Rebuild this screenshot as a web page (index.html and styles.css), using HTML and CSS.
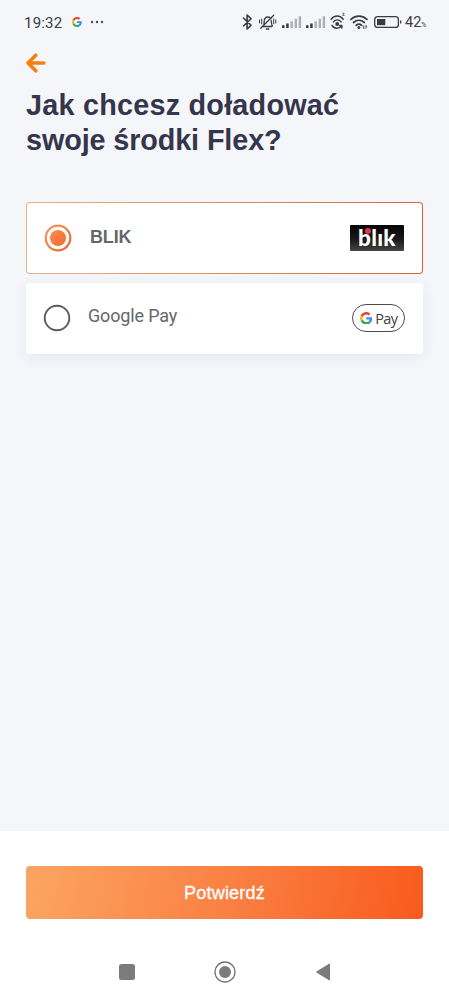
FILE: index.html
```html
<!DOCTYPE html>
<html lang="pl">
<head>
<meta charset="utf-8">
<meta name="viewport" content="width=device-width">
<title>Doładowanie Flex</title>
<link rel="stylesheet" href="styles.css">
</head>
<body>
<svg width="0" height="0" class="defs" aria-hidden="true">
  <defs>
    <symbol id="google-g" viewBox="0 0 48 48">
      <path fill="#EA4335" d="M24 9.500c3.540 0 6.710 1.220 9.210 3.600l6.850-6.850C35.900 2.380 30.470 0 24 0 14.620 0 6.510 5.380 2.560 13.220l7.980 6.190C12.430 13.720 17.740 9.500 24 9.500z"/>
      <path fill="#4285F4" d="M46.980 24.550c0-1.570-.15-3.090-.38-4.550H24v9.020h12.940c-.58 2.960-2.260 5.480-4.780 7.180l7.730 6c4.510-4.180 7.090-10.360 7.090-17.650z"/>
      <path fill="#FBBC05" d="M10.530 28.590c-.48-1.450-.76-2.990-.76-4.590s.27-3.140.76-4.590l-7.980-6.190C.92 16.460 0 20.120 0 24c0 3.880.92 7.540 2.560 10.780l7.970-6.190z"/>
      <path fill="#34A853" d="M24 48c6.480 0 11.930-2.130 15.890-5.810l-7.730-6c-2.150 1.450-4.920 2.300-8.160 2.300-6.260 0-11.570-4.220-13.470-9.910l-7.980 6.190C6.510 42.620 14.620 48 24 48z"/>
    </symbol>
    <linearGradient id="radio-fill" x1="0" y1="0" x2="1" y2="1">
      <stop offset="0" stop-color="#f79a5c"/><stop offset="1" stop-color="#e9622d"/>
    </linearGradient>
    <linearGradient id="dot-fill" x1="0" y1="0" x2="1" y2="1">
      <stop offset="0" stop-color="#fb8d4d"/><stop offset="1" stop-color="#f36a2f"/>
    </linearGradient>
  </defs>
</svg>
<div class="screen">
  <header class="status">
    <span class="time">19:32</span>
    <svg class="status-g" width="10" height="10"><use href="#google-g"/></svg>
    <svg class="more" width="14" height="4" viewBox="0 0 14 4" fill="#444b57"><circle cx="2" cy="2" r="1.200"/><circle cx="7" cy="2" r="1.200"/><circle cx="12" cy="2" r="1.200"/></svg>
    <svg class="icons" width="162" height="22" viewBox="240 11 162 22" fill="none" stroke="#3a3c42" stroke-linecap="round" stroke-linejoin="round">
      <path stroke-width="1.600" d="M243.500 18l7.500 7.300-3.900 3.700V15l3.900 3.700-7.500 7.300"/>
      <g stroke-width="1.300">
        <path d="M262.500 26.500h9.300M263.400 26c.8-1.500.7-2.700.8-5 .2-2.500 1.500-4 3.800-4 1.300 0 2.300.5 3 1.500M271.200 20.500c.1 2.500.2 4 1.200 5.500M266.300 29h2.600M273.700 15.200l-13 13"/>
        <path stroke-width="1" d="M261.700 19v4.800M259.500 20v3M273.700 19v4.800M275.800 20v3"/>
      </g>
      <g stroke="none">
        <g id="signal"><path fill="#3a3c42" d="M282 25.200h2.500v2.900H282zM286.200 23.500h2.500v4.600h-2.500z"/><path fill="#adafb4" d="M290.500 21.200h2.400v6.900h-2.400zM294.600 18.700h2.400v9.400h-2.400zM298.700 16.200h2.400v11.900h-2.400z"/></g>
        <use href="#signal" x="24"/>
      </g>
      <g stroke-width="1.450">
        <path d="M331.100 19.300c3.200-4.400 8.900-4.400 12.100 0M333.300 21.900c2.200-2.700 5.600-2.700 7.800 0M332 25.300c2.100 3.700 7.100 3.900 9.700.4M341.900 28v-2.500h-2.300"/>
        <circle cx="337.200" cy="24" r="1.200" fill="#3a3c42"/>
        <path stroke-width=".7" d="M342.700 13.200h1.500l-1.500 2.300h1.500"/>
      </g>
      <g stroke-width="1.800">
        <path d="M350.900 19.300c4.700-4.300 11.300-4.300 16 0M353.500 22.500c3.200-2.900 7.600-2.900 10.800 0M356.200 25.300c1.500-1.500 3.900-1.500 5.400 0"/>
        <circle cx="358.900" cy="27.500" r=".6" fill="#3a3c42"/>
        <path stroke-width=".9" d="M363.800 25.800v2.500M363 27.600l.8.700M366 28.300v-2.500M366 25.800l.8.700"/>
      </g>
      <rect x="374.700" y="16.700" width="23.700" height="10.700" rx="3" stroke-width="1.300"/>
      <path fill="#3a3c42" stroke="none" d="M377 19h8.300v6.200H377z"/>
      <path stroke-width="1.300" d="M400.700 21v2"/>
    </svg>
    <span class="level">42</span><span class="percent">%</span>
  </header>

  <main class="content">
    <svg class="back" width="20" height="20" viewBox="0 0 20 20" fill="none" stroke="#f4810f" stroke-width="3.500" stroke-linecap="round" stroke-linejoin="round"><path d="M9.800 2.200L2 10l7.800 7.800M2.500 10h15.400"/></svg>
    <h1><span class="line-one">Jak chcesz doładować</span><br><span class="line-two">swoje środki Flex?</span></h1>
    <div class="options">
      <div class="option selected">
        <svg class="radio" width="28" height="28" viewBox="0 0 28 28"><circle cx="14" cy="14" r="12.300" fill="none" stroke="url(#radio-fill)" stroke-width="2.200"/><circle cx="14" cy="14" r="8" fill="url(#dot-fill)"/></svg>
        <span class="label">BLIK</span>
        <span class="blik"><span class="blik-text">blık</span><i class="blik-dot"></i></span>
      </div>
      <div class="option">
        <svg class="radio" width="28" height="28" viewBox="0 0 28 28"><circle cx="14" cy="14" r="12.300" fill="none" stroke="#5b5c60" stroke-width="1.900"/></svg>
        <span class="label">Google Pay</span>
        <span class="gpay"><svg width="12.500" height="12.500"><use href="#google-g"/></svg><span class="pay">Pay</span></span>
      </div>
    </div>
  </main>

  <footer class="footer">
    <button class="confirm">Potwierdź</button>
    <nav class="nav">
      <svg width="16" height="16" viewBox="0 0 16 16"><rect width="16" height="16" rx="2.500" fill="#7b7b7b"/></svg>
      <svg width="22" height="22" viewBox="0 0 22 22"><circle cx="11" cy="11" r="10" fill="none" stroke="#757575" stroke-width="1.300"/><circle cx="11" cy="11" r="6" fill="#7b7b7b"/></svg>
      <svg width="16" height="20" viewBox="0 0 16 20"><path d="M1.500 10L14.500 2v16z" fill="#7b7b7b" stroke="#7b7b7b" stroke-linejoin="round"/></svg>
    </nav>
  </footer>
</div>
</body>
</html>
```
FILE: styles.css
```css
* { box-sizing: border-box; }
body { margin: 0; background: #f4f6fa; font-family: "Liberation Sans", Arial, sans-serif; }
.defs { position: absolute; }
.screen { width: 449px; height: 998px; display: flex; flex-direction: column; }

.status { height: 44px; padding-left: 24px; display: flex; align-items: center; font-family: Roboto, sans-serif; color: #3a3c42; }
.time { width: 48px; padding-top: 1px; font-size: 15px; letter-spacing: .2px; }
.status-g { flex: none; }
.more { margin-left: 8px; }
.icons { margin-left: 136px; flex: none; }
.level { margin-left: 3px; padding-top: 1px; font-size: 14.500px; }
.percent { font-size: 7px; margin-top: 6px; }

.content { flex: 1; padding: 9px 26px 0; }
.back { display: block; }
h1 { margin: 15px 0 0; font-size: 28.800px; line-height: 35px; color: #35354b; white-space: nowrap; }
.line-one { letter-spacing: .22px; }
.line-two { letter-spacing: -.12px; }
.options { margin-top: 44px; display: grid; gap: 9px; }
.option { height: 71px; padding: 0 18px 1px; display: flex; align-items: center; border-radius: 4px; background: #fff; box-shadow: 0 3px 14px rgba(60, 70, 100, .075); font-family: Roboto, sans-serif; font-size: 18px; letter-spacing: -.15px; color: #66666a; }
.option.selected { height: 72px; padding: 0 17px 0 18px; border: 1.500px solid transparent; background: linear-gradient(#fff, #fff) padding-box, linear-gradient(90deg, #e5b38b, #d6643a) border-box; font-family: "Liberation Sans", sans-serif; font-weight: 700; box-shadow: none; }
.radio { margin-left: -1px; }
.label { margin: 0 auto 5px 17px; }
.selected .label { margin: 0 auto 2px 18px; }
.blik { position: relative; width: 54px; height: 26px; margin-right: 1px; background: linear-gradient(#050505, #191919 55%, #444); display: flex; justify-content: center; border-radius: 1px; }
.blik-text { color: #fff; font: 900 22.500px/26px Lato, sans-serif; letter-spacing: .3px; }
.blik-dot { position: absolute; left: 15px; top: 3px; width: 6px; height: 6px; border-radius: 50%; background: #e5354e; }
.gpay { width: 53px; height: 28px; border: 1.300px solid #4c4d50; border-radius: 14px; display: flex; align-items: center; justify-content: center; gap: 3px; }
.pay { padding-top: 1px; font: 14.500px/24px "Open Sans", sans-serif; letter-spacing: -.6px; color: #3c4043; }

.footer { height: 167px; padding: 35px 26px 0; background: #fff; }
.confirm { display: block; width: 100%; height: 53px; padding: 2px 0 0; border: 0; border-radius: 4px; background: linear-gradient(100deg, #fba562, #fa8144 50%, #f85b1c); color: #fff; font: 18px "Liberation Sans", sans-serif; letter-spacing: .2px; -webkit-text-stroke: .3px #fff; }
.nav { margin-top: 42px; padding: 0 92px 0 93px; display: flex; align-items: center; justify-content: space-between; }
```
